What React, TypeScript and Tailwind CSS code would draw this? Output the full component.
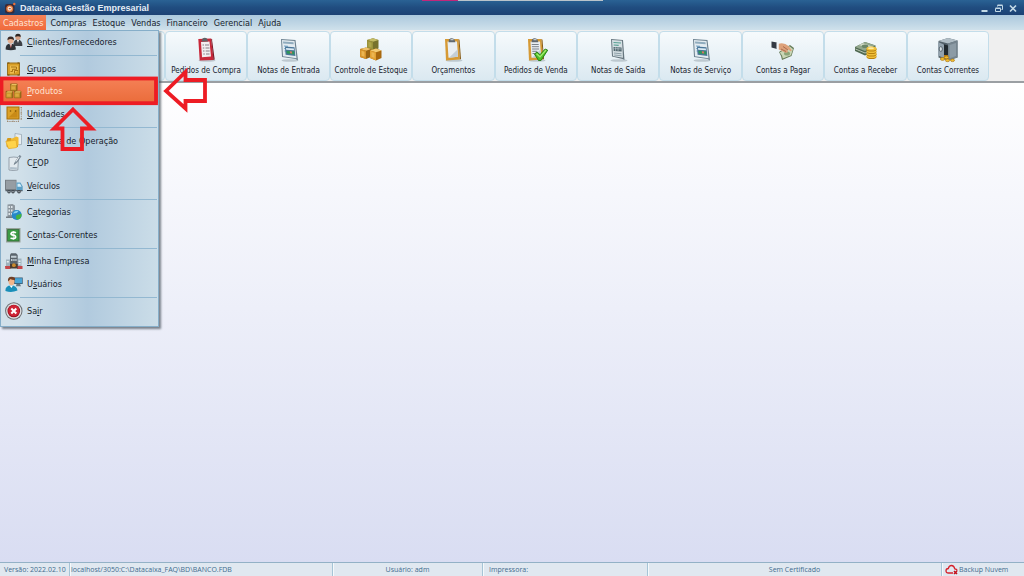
import type { ReactNode } from "react";

/* ---------- drawing helpers ---------- */

function Icon({ size, children }: { size: 18 | 26; children: ReactNode }) {
  return (
    <svg
      viewBox={size === 18 ? "0 0 18 18" : "0 0 26 26"}
      className={size === 18 ? "size-[18px] shrink-0" : "size-[26px] shrink-0"}
      aria-hidden="true"
    >
      {children}
    </svg>
  );
}

/* ---------- menu icons ---------- */

const PeopleIcon = () => (
  <Icon size={18}>
    <path d="M8.500 11q0-4.500 4-4.500t4.800 4.500v2H8.500z" fill="#3c3f45" />
    <path d="M12 7l1 3 1-3z" fill="#fff" />
    <circle cx="13" cy="4.200" r="2.600" fill="#d9a184" />
    <path d="M10.300 4Q10 .8 13 .8T15.700 4Q13 2.500 10.300 4z" fill="#2d2623" />
    <path d="M.6 16.500q-.2-6 5-6t5.300 6q-5 1.500-10.300 0z" fill="#2f3237" />
    <path d="M4.300 10.500h2.900l-1.400 4z" fill="#f4f4f6" />
    <path d="M5.600 11.200h.7v3l-.4.900-.5-.9z" fill="#b23b32" />
    <circle cx="5.700" cy="7.400" r="3" fill="#e5b193" />
    <path d="M2.500 7.200Q2 3.500 5.700 3.400t3.200 3.800Q5.700 5 2.500 7.200z" fill="#3a2a25" />
  </Icon>
);

const GroupIcon = () => (
  <Icon size={18}>
    <rect x="2" y="2.500" width="13" height="13" rx=".5" fill="#99701f" />
    <rect x="3" y="3.500" width="11" height="11" fill="#d79d25" />
    <path d="M5 5.500h8v5L9.500 13.500H5z" fill="#eebe4f" />
    <path d="M6 7h5.500v2.300H7.500v2.200H5.500M9.500 13.500v-3h3.500" stroke="#a87214" strokeWidth="1" fill="none" />
    <path d="M2.500 3h2M12.500 3h2M2.500 15h2M12.500 15h2" stroke="#6f4a05" />
  </Icon>
);

const CubesIcon = () => (
  <Icon size={18}>
    {[
      [5, 1.5],
      [0.6, 8.8],
      [8.8, 8.8],
    ].map(([x, y]) => (
      <g key={x}>
        <rect x={x} y={y} width="7.600" height="7.400" rx="1" fill="#94681a" />
        <path d={`M${x + 0.6} ${y + 2}l1.400-1.500h5l-1 1.500z`} fill="#e9c05e" />
        <rect x={x + 0.6} y={y + 2} width="5.400" height="4.800" fill="#c8952c" />
        <rect x={x + 1.5} y={y + 3} width="3.500" height="2.800" fill="#dba93e" />
      </g>
    ))}
  </Icon>
);

const UnitIcon = () => (
  <Icon size={18}>
    <rect x="1.500" y="1.500" width="13" height="13" fill="#a76f08" />
    <rect x="2.500" y="2.500" width="11" height="11" fill="#dca128" />
    <path d="M3.500 12.500L12.500 4v8.500z" fill="#c88a17" />
    <circle cx="5.500" cy="6" r=".8" fill="#7a5206" />
    <circle cx="10.500" cy="6" r=".8" fill="#7a5206" />
    <path d="M16.300 2v12.500M15.500 2.500h2M15.500 8h2M15.500 14h2M2 16.500h12M2.500 15.500v2M8 15.500v2M13.500 15.500v2" stroke="#9a846a" strokeWidth=".8" strokeDasharray="1.500 .7" />
  </Icon>
);

const FolderIcon = () => (
  <Icon size={18}>
    <path d="M10 1.500l6.500 1v10L10 13z" fill="#e8edf0" stroke="#90a1ae" strokeWidth=".7" />
    <path d="M1.500 8.500l1-2.500h3.500l1 1.200 5-1.200 1 1v8l-9 1.500-2.500-2z" fill="#d59a1c" />
    <path d="M6 7l5.500-2.500 2 1V13L6 16z" fill="#f1b92f" />
    <path d="M.8 9.500l8.700-1.200q1.500 0 1.700 1l.8 5.700q0 1-8.500 1.500z" fill="#ffd349" stroke="#e1a525" strokeWidth=".6" />
  </Icon>
);

const NoteIcon = () => (
  <Icon size={18}>
    <path d="M4 3.500q5-1 9.500 0L12.800 16q-5 1-8.800 0z" fill="#e3eaef" stroke="#8c99a4" strokeWidth=".9" />
    <path d="M5.200 13l6.800.5-.3 2H5z" fill="#b1c0cc" />
    <path d="M14.500 1.500l-4 6-1.500 3 2.700-1.700 4.300-6.500z" fill="#8796a3" stroke="#66747f" strokeWidth=".6" />
    <path d="M14 3L11 7.500" stroke="#eef3f6" />
  </Icon>
);

const TruckIcon = () => (
  <Icon size={18}>
    <rect x="0" y="2.800" width="11.500" height="10.500" fill="#757c82" />
    <rect x="1" y="3.600" width="9.800" height="8.400" fill="#969da3" />
    <path d="M11.500 5.500h4l2.200 4V14h-6.200z" fill="#5b9fc6" />
    <path d="M12.500 6.700h2.500l1.600 3h-4.100z" fill="#d4edf8" />
    <path d="M.5 13h17v1.300H.5z" fill="#5a636b" />
    <circle cx="4" cy="14.700" r="1.700" fill="#3f474e" />
    <circle cx="8" cy="14.700" r="1.700" fill="#3f474e" />
    <circle cx="14" cy="14.700" r="1.800" fill="#3f474e" />
    <g fill="#d5dce1">
      <circle cx="4" cy="14.700" r=".6" />
      <circle cx="8" cy="14.700" r=".6" />
      <circle cx="14" cy="14.700" r=".6" />
    </g>
  </Icon>
);

const CategoryIcon = () => (
  <Icon size={18}>
    <path d="M2.500 1.500l5-.5 2.500 1.500V15H2.500z" fill="#8d979f" />
    <path d="M3.500 3h1.500v2H3.500zM6 3h1.500v2H6zM3.500 6.500h1.500v2H3.500zM6 6.500h1.500v2H6zM3.500 10h1.500v2H3.500zM6 10h1.500v2H6z" fill="#dfe6ea" />
    <path d="M1 13.500h7V15H1z" fill="#747d85" />
    <circle cx="11.700" cy="12" r="5" fill="#2688c8" />
    <path d="M7.800 10.500q2-3.700 5.700-2.500-1 2.500-5.700 2.500z" fill="#8cd0f0" />
    <path d="M11.700 12l4.800-1.200q.6 4.800-4.200 6-2.300-2.200-.6-4.800z" fill="#45b341" />
  </Icon>
);

const MoneyIcon = () => (
  <Icon size={18}>
    <rect x="1" y="2" width="14.500" height="14.500" fill="#98a49b" />
    <rect x="2.200" y="3.200" width="12.200" height="12.200" fill="#2c6b34" />
    <rect x="3" y="4" width="10.600" height="10.600" fill="#3c9b43" />
    <path d="M10.900 6.900Q10 6.100 8.300 6.100T6 7.600q0 1.300 2.300 1.600t2.300 1.900q0 1.500-2.300 1.500T5.700 11.700" fill="none" stroke="#fff" strokeWidth="1.700" />
    <path d="M8.300 5v8.700" stroke="#fff" strokeWidth=".7" />
  </Icon>
);

const CompanyIcon = () => (
  <Icon size={18}>
    <path d="M1 7.500h4v8H1zM12.500 6.500h4v9h-4z" fill="#9fb2bd" />
    <path d="M5 3l1-1.800h5L12.700 3v12H5z" fill="#59636b" />
    <path d="M6 3.800h5.500v2H6zM6 7h1.500v2H6zM8.300 7h1.300v2H8.300zM10.300 7h1.300v2h-1.300z" fill="#c2ced5" />
    <path d="M1.800 9h2v1.500h-2zM13.500 8.500h2V10h-2zM13.500 11h2v1.500h-2z" fill="#eaf1f4" />
    <path d="M0 14h5.500v3H.3zM12 14h5.500v3H12z" fill="#c4474b" />
    <path d="M5 12h7.700v4.500H5z" fill="#4b3c30" />
    <circle cx="8.900" cy="13.200" r="1.900" fill="#c98a2d" />
  </Icon>
);

const UserIcon = () => (
  <Icon size={18}>
    <rect x="9" y="2.500" width="8.700" height="6.500" fill="#37586f" />
    <rect x="9.800" y="3.200" width="7.200" height="5" fill="#49a5d6" />
    <path d="M11.500 9h3.500l1 2.300h-5z" fill="#637783" />
    <path d="M.4 16q-.2-5.500 5.600-5.500t6.500 5q-6 2.500-12.100.5z" fill="#198fb9" />
    <path d="M4.500 10.500h3.500L6.500 13z" fill="#fff" />
    <ellipse cx="6.500" cy="6.500" rx="3" ry="3.800" fill="#f1b58b" />
    <path d="M3 6.500Q2.300 1.800 6.500 1.800T10 5Q7 5.200 5.500 4 4.500 5.200 3 6.500z" fill="#704026" />
  </Icon>
);

const ExitIcon = () => (
  <Icon size={18}>
    <circle cx="8.800" cy="9" r="8.700" fill="#6a6e72" />
    <circle cx="8.800" cy="9" r="7.700" fill="#dcdfe1" />
    <circle cx="8.800" cy="9" r="6.300" fill="#96101f" />
    <circle cx="8.800" cy="8.700" r="5.600" fill="#cf2435" />
    <path d="M6.300 6.500l5 5M11.300 6.500l-5 5" stroke="#fff" strokeWidth="2" />
  </Icon>
);

/* ---------- toolbar icons ---------- */

const ClipShadow = () => <ellipse cx="14" cy="23.500" rx="8.500" ry="1.300" fill="#8b98a1" opacity=".45" />;

const RedClipboard = () => (
  <Icon size={26}>
    <ClipShadow />
    <path d="M5.300 2l12.700-.5 2.700 21.500-14 .5z" fill="#c8283a" />
    <path d="M19 2.500L18 1.500l2.500 21.500 1.200-.6z" fill="#7c1724" />
    <path d="M8 5l8.500-.4L18 19.500l-9 .7z" fill="#f1eef0" />
    <path d="M9.500 1.500q2.200-1.700 4.500 0l1 3H8.500z" fill="#5f6267" />
    <path d="M9.500 8h1.500M12 8h4M9.800 11h1.500M12.500 11h4M10 14h1.500M12.700 14h4M10.300 17h1.500M13 17h3.500" stroke="#877c86" strokeWidth="1" />
  </Icon>
);

const NoteSheet = () => (
  <Icon size={26}>
    <ClipShadow />
    <path d="M5 2l14.500 1 2.500 20.500-2.500-1.500-13.500-2z" fill="#6d8290" />
    <path d="M6 3l12.500.9 2 17.300L7 19.300z" fill="#e3ebf0" />
    <path d="M7 4.500l10.500.7.2 2L7.200 6.600z" fill="#8fabbd" />
    <path d="M8 9l4 .3M8.200 11.500l2 .2M8.500 14h1.500" stroke="#6fa4c8" />
    <path d="M9 9.500l9.500.8.900 8.700-9.800-1.300z" fill="#4a7699" />
    <path d="M10 11l7.800.6.2 1.700-7.800-.6z" fill="#dcecf5" />
    <path d="M10.500 13.800l7.600.7.300 2.900-7.600-1z" fill="#2d965a" />
    <path d="M13.800 14.300l2.200.2.200 2-2.200-.3z" fill="#d8706a" />
  </Icon>
);

const Boxes = () => (
  <Icon size={26}>
    <path d="M9 3l6-1.800L20.500 3v8.500l-5.500 2-6-2z" fill="#77722c" />
    <path d="M9 3l6-1.800L20.500 3 15 4.800z" fill="#c4bc66" />
    <path d="M9 3l6 1.800V13.500l-6-2z" fill="#9a923a" />
    <path d="M2 12l6-1.500 5 1.500v8l-5 2-6-2z" fill="#9b6412" />
    <path d="M2 12l6-1.500 5 1.500-5 1.700z" fill="#eec26a" />
    <path d="M2 12l6 1.700V22l-6-2z" fill="#d6922a" />
    <path d="M12 13.500l6-2 5.500 2v7.500l-5.500 2.500-6-2.500z" fill="#a8680f" />
    <path d="M12 13.500l6-2 5.500 2L18 15.300z" fill="#f3cb74" />
    <path d="M12 13.500l6 1.800v8.200L12 21z" fill="#e2a032" />
    <path d="M13.500 15l3 1v5l-3-1.200zM3.500 13.800l3 1v5l-3-1z" fill="#ecb550" />
    <path d="M10.500 4.800l3 1v5l-3-1z" fill="#aea64a" />
  </Icon>
);

const GoldClipboard = ({ lines = false }: { lines?: boolean }) => (
  <Icon size={26}>
    <ClipShadow />
    <path d="M5 2h13.500L20 22.500 6 23.500z" fill="#d69a35" />
    <path d="M18.500 2l1 .8L21 22l-1 .5z" fill="#875b17" />
    <path d="M7.500 4.500h9.500L18 19.800 8.500 20.800z" fill="#e9eef2" />
    <path d="M17.500 12.500l.5 7.300-9 1z" fill="#c4ced6" />
    <path d="M9 2.500q2.500-3 5.500 0l.8 2.700H8.500z" fill="#61686e" />
    <path d="M10.500 2q1.500-1.200 3 0v1.200h-3z" fill="#c0c6ca" />
    {lines && (
      <>
        <path d="M8.700 7.500h7M8.900 9.700h7M9.100 12h7M9.300 14.300h5M9.500 16.500h4" stroke="#7a828b" />
        <path d="M11.500 17l2.500-2 3 2.700 5.200-5.700 2.500 1.200-6.700 10.300h-2.500z" fill="#4fbf26" stroke="#20770f" strokeWidth=".9" />
        <path d="M13.500 16.800l3.500 3 6-6.800" stroke="#a4ec72" strokeWidth="1.200" fill="none" />
      </>
    )}
  </Icon>
);

const ExitSheet = () => (
  <Icon size={26}>
    <ClipShadow />
    <path d="M6 2l12 1 1.500 20-2-1-10.500-2.500z" fill="#65757e" />
    <path d="M7 3l10 .8 1 17L8 19z" fill="#d5dfe3" />
    <path d="M8.500 5.500l7.500.5M8.700 8l5 .4" stroke="#57a093" strokeWidth="1.200" />
    <path d="M8.500 10l8 .6.2 3.900-8-.6z" fill="#52676f" />
    <path d="M9.500 11.500l6.500.5M10.500 10.200l.1 3.700M13 10.400l.1 3.700" stroke="#b5c4ca" strokeWidth=".7" />
    <path d="M9 16l7.500.8M9.200 18l7.500.8" stroke="#8da0a9" />
  </Icon>
);

const PayIcon = () => (
  <Icon size={26}>
    <path d="M9 15l11-7 4 3-2.500 8L12 23l-1-4z" fill="#667b58" />
    <path d="M9.800 15.500l9.700-6.200 3.500 2.700-2 6.200-8.200 3.400-.8-3z" fill="#c9d6b5" />
    <ellipse cx="17" cy="16.500" rx="3" ry="2" fill="#8ca477" />
    <path d="M8 7q6-2 10.500 2l3 4q.5 1.500-1.200 1l-3-2.200.5 3q-.5 1.700-4.300 0L8 12z" fill="#dda17a" />
    <path d="M13 9.500l5 3.500M11 12l5 2.500" stroke="#9c5e42" strokeWidth=".8" />
    <path d="M1.500 4.500l5.500 1v6.500l-5.500-1.500z" fill="#343a43" />
    <path d="M6.500 5.300l2.300.7v6.500l-2.300-.7z" fill="#f1f3f5" />
  </Icon>
);

const ReceiveIcon = () => (
  <Icon size={26}>
    <path d="M2 10L12 5l10.500 3.500v5L12 18.500 2 14z" fill="#4f6951" />
    <path d="M2 10L12 5l10.500 3.500L12 14z" fill="#93a78d" />
    <path d="M6 8l4-1.800L20 9.800l-4 2z" fill="#d2dac6" />
    <ellipse cx="12" cy="9.300" rx="3.300" ry="1.800" fill="#6b8667" />
    <path d="M2.500 12l9.500 4 4-1.500" stroke="#b9c6b2" fill="none" />
    {[19, 16.5, 14, 11.5].map((y) => (
      <g key={y}>
        <ellipse cx="18.500" cy={y + 0.8} rx="5" ry="2.300" fill="#b8800e" />
        <ellipse cx="18.500" cy={y} rx="5" ry="2.100" fill="#f0c13a" />
      </g>
    ))}
    <ellipse cx="18" cy="11.200" rx="3" ry="1" fill="#ffeaa0" />
  </Icon>
);

const SafeIcon = () => (
  <Icon size={26}>
    <path d="M3.500 4L13 1l9.500 2.500v17L13 23.500l-9.500-3z" fill="#526069" />
    <path d="M3.500 4L13 1l9.500 2.500-9.500 3z" fill="#b1bec6" />
    <path d="M13 6.500l9.500-3v17L13 23.500z" fill="#75848e" />
    <path d="M14.500 8l6.500-2v13l-6.500 2.200z" fill="#8c9ba5" />
    <path d="M7.500 7l5.500 1.500v12L7.500 19z" fill="#20292e" />
    <path d="M3 5l6 2.500V21l-6-2.500z" fill="#93a2ad" />
    <ellipse cx="5.800" cy="12" rx="1.600" ry="2.400" fill="#d7e0e5" stroke="#46545d" strokeWidth=".8" />
    <path d="M9 18h4v3H9z" fill="#bb7b0e" />
    <g fill="#f1bd30" stroke="#a36c0c" strokeWidth=".6">
      <ellipse cx="7.500" cy="22" rx="2.200" ry="1.400" />
      <ellipse cx="11.500" cy="20.500" rx="2.200" ry="1.400" />
      <ellipse cx="12.500" cy="23.300" rx="2.200" ry="1.400" />
      <ellipse cx="17.500" cy="23.300" rx="2" ry="1.300" />
    </g>
  </Icon>
);

/* ---------- data ---------- */

const menus = ["Cadastros", "Compras", "Estoque", "Vendas", "Financeiro", "Gerencial", "Ajuda"];

type Entry = { before: string; key: string; after: string; icon: ReactNode; active?: boolean };

const groups: Entry[][] = [
  [{ before: "", key: "C", after: "lientes/Fornecedores", icon: <PeopleIcon /> }],
  [
    { before: "", key: "G", after: "rupos", icon: <GroupIcon /> },
    { before: "", key: "P", after: "rodutos", icon: <CubesIcon />, active: true },
    { before: "", key: "U", after: "nidades", icon: <UnitIcon /> },
  ],
  [
    { before: "", key: "N", after: "atureza de Operação", icon: <FolderIcon /> },
    { before: "C", key: "F", after: "OP", icon: <NoteIcon /> },
    { before: "", key: "V", after: "eículos", icon: <TruckIcon /> },
  ],
  [
    { before: "C", key: "a", after: "tegorias", icon: <CategoryIcon /> },
    { before: "C", key: "o", after: "ntas-Correntes", icon: <MoneyIcon /> },
  ],
  [
    { before: "", key: "M", after: "inha Empresa", icon: <CompanyIcon /> },
    { before: "U", key: "s", after: "uários", icon: <UserIcon /> },
  ],
  [{ before: "Sa", key: "i", after: "r", icon: <ExitIcon /> }],
];

const tools: { label: string; icon: ReactNode }[] = [
  { label: "Pedidos de Compra", icon: <RedClipboard /> },
  { label: "Notas de Entrada", icon: <NoteSheet /> },
  { label: "Controle de Estoque", icon: <Boxes /> },
  { label: "Orçamentos", icon: <GoldClipboard /> },
  { label: "Pedidos de Venda", icon: <GoldClipboard lines /> },
  { label: "Notas de Saída", icon: <ExitSheet /> },
  { label: "Notas de Serviço", icon: <NoteSheet /> },
  { label: "Contas a Pagar", icon: <PayIcon /> },
  { label: "Contas a Receber", icon: <ReceiveIcon /> },
  { label: "Contas Correntes", icon: <SafeIcon /> },
];

/* ---------- sections ---------- */

function TitleBar() {
  return (
    <header className="relative flex h-[15px] items-center bg-linear-to-b from-[#2a6294] via-[#204d80] to-[#1c4174] pr-1 pl-1">
      <div className="absolute inset-x-0 top-0 flex h-px">
        <span className="w-[41.200%]" />
        <span className="w-[3.500%] bg-[#c2277a]" />
        <span className="w-[14.200%] bg-[#b9c3cb]" />
      </div>
      <svg viewBox="0 0 12 12" className="size-3 shrink-0" aria-hidden="true">
        <rect x="1" y="2" width="9.500" height="9.500" rx="2" fill="#3b2b38" />
        <circle cx="5.700" cy="6.700" r="3.500" fill="#e5793b" />
        <circle cx="5.700" cy="6.700" r="2.100" fill="#f8e6d8" />
        <path d="M4.800 6.700h2" stroke="#9c4425" />
        <circle cx="10.300" cy="2" r="1.200" fill="#ef7037" />
      </svg>
      <h1 className="ml-1 font-['Liberation_Sans',sans-serif] text-[9px] leading-3 font-bold text-[#e6eef6]">
        Datacaixa Gestão Empresarial
      </h1>
      <div className="ml-auto flex items-center gap-1 pr-[2px] text-[#c2d9e6]">
        <button type="button" aria-label="Minimizar" className="size-[10px]">
          <svg viewBox="0 0 10 10" className="size-full">
            <path d="M1.500 8h6" stroke="currentColor" strokeWidth="2" />
          </svg>
        </button>
        <button type="button" aria-label="Restaurar" className="size-[10px]">
          <svg viewBox="0 0 10 10" className="size-full" fill="none" stroke="currentColor">
            <path d="M3.500 3.500v-1h5v4h-1M3.500 2h5" />
            <path d="M1.500 5.500h5v3h-5zM1.500 5h5" />
          </svg>
        </button>
        <button type="button" aria-label="Fechar" className="size-[10px]">
          <svg viewBox="0 0 10 10" className="size-full">
            <path d="M2 2.500l6 6M8 2.500l-6 6" stroke="currentColor" strokeWidth="1.700" />
          </svg>
        </button>
      </div>
    </header>
  );
}

function MenuBar() {
  return (
    <nav className="flex h-[15px] items-stretch bg-linear-to-b from-[#abc8dd] to-[#cfe1eb] text-[9px] leading-3">
      {menus.map((m, i) => (
        <button
          key={m}
          type="button"
          className={
            i === 0
              ? "mr-px bg-linear-to-b from-[#f58257] to-[#f06a3c] px-[3px] text-[#ffe3d4]"
              : "px-[3px] text-[#17222c]"
          }
        >
          {m}
        </button>
      ))}
    </nav>
  );
}

function DropMenu() {
  return (
    <div className="absolute top-[30px] left-0 z-10 flex h-[297px] w-[159px] flex-col border border-[#86aec9] bg-linear-to-r from-[#d2e1ea] from-10% via-[#b1cade] via-55% to-[#cbdde8] pb-1 text-[9px] leading-3 text-[#17222c] shadow-[2px_2px_2px_rgba(60,70,80,0.65)]">
      {groups.map((g, gi) => (
        <div key={gi} className="contents">
          {gi > 0 && (
            <div className="flex h-1 shrink-0 items-center pr-px pl-[19px]">
              <hr className="w-full border-t border-[#93b8d1]" />
            </div>
          )}
          {g.map((e) => (
            <button
              key={e.key + e.after}
              type="button"
              className={
                e.active
                  ? "flex flex-1 items-center gap-1 bg-linear-to-b from-[#f47f54] to-[#ea6c3a] pl-1 text-left text-[#ffe3d2]"
                  : "flex flex-1 items-center gap-1 pl-1 text-left"
              }
            >
              {e.icon}
              <span>
                {e.before}
                <span className="underline">{e.key}</span>
                {e.after}
              </span>
            </button>
          ))}
        </div>
      ))}
    </div>
  );
}

const toolClass =
  "flex flex-col items-center rounded-sm border border-[#c3ddea] bg-linear-to-b from-[#f6fafc] to-[#dbe9f1] pt-[5px]";

function Toolbar() {
  return (
    <div className="border-b-2 border-[#9b9fa3] bg-[#efefef] pt-px">
      <div className="grid w-[96.600%] grid-cols-12 text-[8px] leading-3 text-[#17222c]">
        <div className={toolClass} />
        <div className={toolClass} />
        {tools.map((t) => (
          <button key={t.label} type="button" className={`${toolClass} h-[50px]`}>
            {t.icon}
            <span className="mt-[2px] whitespace-nowrap">{t.label}</span>
          </button>
        ))}
      </div>
    </div>
  );
}

/* Red outlines that point at the highlighted entry. */
function Callouts() {
  return (
    <svg
      viewBox="0 0 210 156"
      className="pointer-events-none absolute top-0 left-0 z-20 h-[156px] w-[210px]"
      fill="none"
      stroke="#ed1c24"
      strokeWidth="3.800"
      aria-hidden="true"
    >
      <rect x="1.500" y="78.500" width="154.500" height="24.700" />
      <path d="M166 91L185.500 72v8H205v21H185.500v7.500z" />
      <path d="M73 109.500l19 19H82V149H62.500v-20.500H54z" />
    </svg>
  );
}

function StatusBar() {
  const cell = "flex items-center border-r border-[#a6c4d6] shadow-[1px_0_0_#f5f9fb]";
  return (
    <footer className="grid h-[14px] grid-cols-[70fr_263fr_150fr_165fr_294fr_82fr] border-t border-[#93b1c6] bg-[#e0e8f0] font-['Open_Sans',sans-serif] text-[7px] leading-3 whitespace-nowrap text-[#3f6b8e]">
      <div className={`${cell} pl-1`}>Versão: 2022.02.10</div>
      <div className={`${cell} pl-px`}>localhost/3050:C:\Datacaixa_FAQ\BD\BANCO.FDB</div>
      <div className={`${cell} justify-center`}>Usuário: adm</div>
      <div className={`${cell} pl-[6px]`}>Impressora:</div>
      <div className={`${cell} justify-center`}>Sem Certificado</div>
      <div className="flex items-center gap-px pl-[3px]">
        <svg viewBox="0 0 13 11" className="h-[11px] w-[13px] shrink-0" fill="none" aria-hidden="true">
          <path d="M8 9H3.500Q1 9 1 6.800T3.300 4.500Q4 1.500 6.500 1.500T9.800 4.800Q12 5 12 6.800" stroke="#d5222c" strokeWidth="1.300" />
          <path d="M9 7l3 3M12 7l-3 3" stroke="#c3121d" strokeWidth="1.600" />
        </svg>
        Backup Nuvem
      </div>
    </footer>
  );
}

export default function App() {
  return (
    <div className="relative flex min-h-screen flex-col overflow-hidden font-['DejaVu_Sans_Condensed','DejaVu_Sans',sans-serif]">
      <TitleBar />
      <MenuBar />
      <Toolbar />
      <main className="flex-1 bg-linear-to-b from-[#ffffff] to-[#d9ddf2]" />
      <StatusBar />
      <DropMenu />
      <Callouts />
    </div>
  );
}
